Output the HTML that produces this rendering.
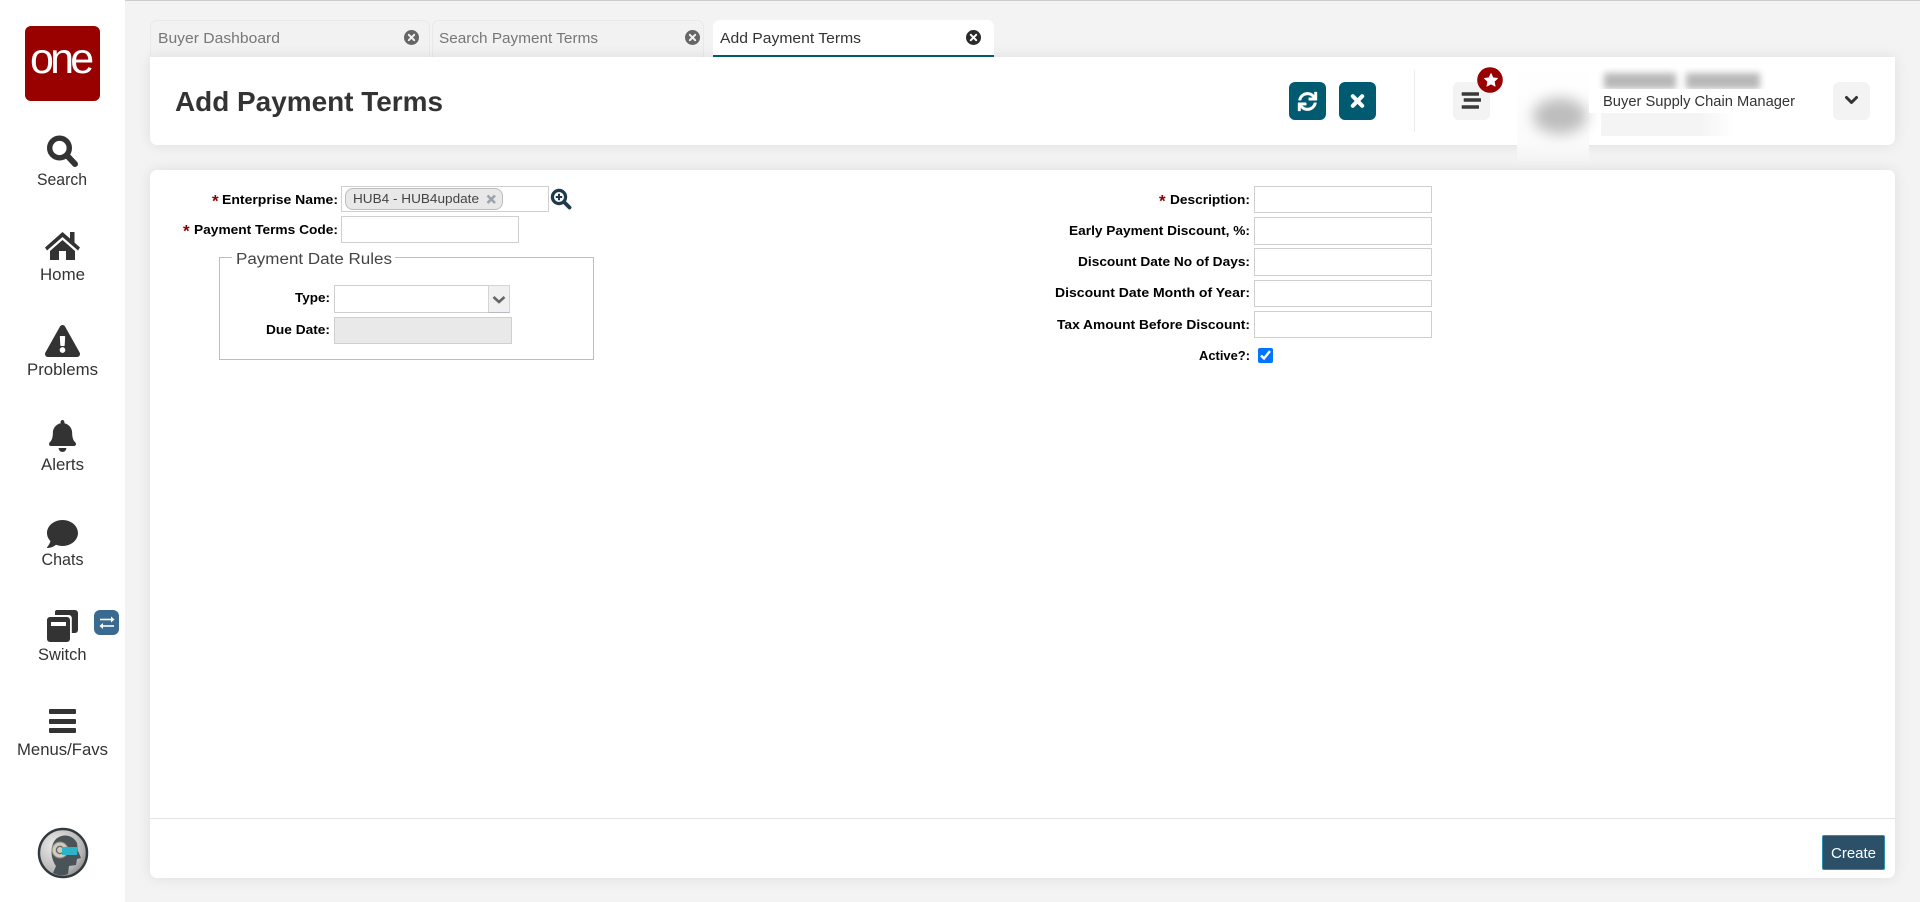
<!DOCTYPE html>
<html lang="en">
<head>
<meta charset="utf-8">
<title>Add Payment Terms</title>
<style>
html,body{margin:0;padding:0;width:1920px;height:902px;overflow:hidden;background:#f3f3f3;font-family:"Liberation Sans",sans-serif}
.a{position:absolute;box-sizing:border-box}
#top{left:0;top:0;width:1920px;height:1px;background:#ccc}
#side{left:0;top:0;width:125px;height:902px;background:#fff}
.tab{top:20px;height:37px;background:#f2f2f2;border:1px solid #e9e9e9;border-bottom:0;border-radius:7px 7px 0 0}
.card{background:#fff;border-radius:7px;box-shadow:0 0 14px rgba(0,0,0,.09)}
input[type=text]{position:absolute;box-sizing:border-box;margin:0;padding:0;background:#fff;border:1px solid #cfcfcf;outline:0}
#overlay{position:absolute;left:0;top:0;width:1920px;height:902px;pointer-events:none}
text{font-family:"Liberation Sans",sans-serif}
.nav{font-size:16.5px;fill:#333}
.lb{font-size:13px;font-weight:700;fill:#000}
.st{font-size:17px;font-weight:700;fill:#8b0000}
</style>
</head>
<body>
<div class="a" id="top"></div>
<div class="a tab" style="left:150px;width:280px"></div>
<div class="a tab" style="left:432px;width:272px"></div>
<div class="a card" style="left:150px;top:57px;width:1745px;height:88px;border-radius:0 0 7px 7px"></div>
<div class="a" style="left:713px;top:20px;width:281px;height:37px;background:#fff;border-radius:7px 7px 0 0;border-bottom:2px solid #005a70"></div>
<div class="a card" style="left:150px;top:170px;width:1745px;height:708px"></div>
<div class="a" style="left:150px;top:818px;width:1745px;height:1px;background:#e4e4e4"></div>
<div class="a" id="side"></div>
<div class="a" style="left:25px;top:26px;width:75px;height:75px;background:#990000;border-radius:6px"></div>

<!-- header buttons -->
<div class="a" style="left:1289px;top:82px;width:37px;height:38px;background:#005a70;border-radius:6px"></div>
<div class="a" style="left:1339px;top:82px;width:37px;height:38px;background:#005a70;border-radius:6px"></div>
<div class="a" style="left:1414px;top:70px;width:1px;height:62px;background:#ececec"></div>
<div class="a" style="left:1453px;top:82px;width:37px;height:38px;background:#f3f3f3;border-radius:6px"></div>
<div class="a" style="left:1833px;top:82px;width:37px;height:38px;background:#f3f3f3;border-radius:6px"></div>

<!-- blurred profile -->
<div class="a" style="left:1517px;top:65px;width:72px;height:96px;background:linear-gradient(#fff 0,#fbfbfb 80%,#f4f4f4 100%)"></div>
<div class="a" style="left:1533px;top:98px;width:54px;height:36px;background:#bdbdbd;border-radius:50%;filter:blur(7px)"></div>
<div class="a" style="left:1604px;top:73px;width:72px;height:16px;background:#b8b8b8;filter:blur(3.5px)"></div>
<div class="a" style="left:1686px;top:73px;width:74px;height:16px;background:#b8b8b8;filter:blur(3.5px)"></div>
<div class="a" style="left:1589px;top:89px;width:215px;height:24px;background:#fff"></div>
<div class="a" style="left:1601px;top:113px;width:132px;height:23px;background:linear-gradient(to right,#f4f4f4 75%,#fff)"></div>

<!-- form, left -->
<input type="text" style="left:341px;top:186px;width:208px;height:26px">
<div class="a" style="left:345px;top:188px;width:158px;height:22px;background:#e8e8e8;border:1px solid #bdbdbd;border-radius:8px"></div>
<input type="text" style="left:341px;top:216px;width:178px;height:27px">
<div class="a" style="left:219px;top:257px;width:375px;height:103px;border:1px solid #bcbcc9"></div>
<div class="a" style="left:232px;top:250px;width:163px;height:16px;background:#fff"></div>
<input type="text" style="left:334px;top:285px;width:176px;height:28px">
<div class="a" style="left:488px;top:285px;width:22px;height:28px;background:#f0f0f0;border:1px solid #d4d4d4;border-bottom-color:#b9b9c6"></div>
<input type="text" disabled style="left:334px;top:317px;width:178px;height:27px;background:#e9e9e9">

<!-- form, right -->
<input type="text" style="left:1254px;top:186px;width:178px;height:27px">
<input type="text" style="left:1254px;top:217px;width:178px;height:28px">
<input type="text" style="left:1254px;top:248px;width:178px;height:28px">
<input type="text" style="left:1254px;top:280px;width:178px;height:27px">
<input type="text" style="left:1254px;top:311px;width:178px;height:27px">
<input type="checkbox" checked style="position:absolute;left:1258px;top:348px;width:15px;height:15px;margin:0">

<!-- create -->
<div class="a" style="left:1822px;top:835px;width:63px;height:35px;background:#2c5068;border:1px solid #2a8fae;border-radius:2px"></div>

<svg id="overlay" viewBox="0 0 1920 902" xmlns="http://www.w3.org/2000/svg">
  <!-- logo -->
  <text x="30" y="73" font-size="43" fill="#fff" letter-spacing="-3.8">one</text>

  <!-- sidebar icons -->
  <g fill="#333">
    <circle cx="59.5" cy="148" r="9.8" fill="none" stroke="#333" stroke-width="5.4"/>
    <path d="M67 155.5 75 164" stroke="#333" stroke-width="6" stroke-linecap="round" fill="none"/>
    <path d="M62.5 232 45 247.5 47 250.5 62.5 237 78 250.5 80 247.5 74.5 242.5V232H70V238.5Z"/>
    <path d="M62.5 240 50 251V260H59V251H66V260H75V251Z"/>
    <path transform="translate(45 325) scale(.0608 .0625)" d="M569.517 440.013C587.975 472.007 564.806 512 527.94 512H48.054c-36.937 0-59.999-40.055-41.577-71.987L246.423 23.985c18.467-32.009 64.72-31.951 83.154 0l239.94 416.028zM288 354c-25.405 0-46 20.595-46 46s20.595 46 46 46 46-20.595 46-46-20.595-46-46-46zm-43.673-165.346l7.418 136c.347 6.364 5.609 11.346 11.982 11.346h48.546c6.373 0 11.635-4.982 11.982-11.346l7.418-136c.375-6.874-5.098-12.654-11.982-12.654h-63.383c-6.884 0-12.356 5.78-11.981 12.654z"/>
    <path transform="translate(49 420) scale(.0603 .0625)" d="M224 512c35.32 0 63.97-28.65 63.97-64H160.03c0 35.35 28.65 64 63.97 64zm215.39-149.71c-19.32-20.76-55.47-51.99-55.47-154.29 0-77.7-54.48-139.9-127.94-155.16V32c0-17.67-14.32-32-31.98-32s-31.98 14.33-31.98 32v20.84C118.56 68.1 64.08 130.3 64.08 208c0 102.3-36.15 133.53-55.47 154.29-6 6.45-8.66 14.16-8.61 21.71.11 16.4 12.98 32 32.1 32h383.8c19.12 0 32-15.6 32.1-32 .05-7.55-2.61-15.27-8.61-21.71z"/>
    <path transform="translate(47 520) scale(.0605 .0625) translate(0 -32)" d="M256 32C114.6 32 0 125.1 0 240c0 49.6 21.4 95 57 130.7C44.5 421.1 2.7 466 2.2 466.5c-2.2 2.3-2.8 5.7-1.5 8.7S4.8 480 8 480c66.3 0 116-31.8 140.6-51.4 32.7 12.3 69 19.4 107.4 19.4 141.4 0 256-93.1 256-208S397.4 32 256 32z"/>
    <!-- switch -->
    <path d="M57 610H75a3 3 0 0 1 3 3V630a3 3 0 0 1-3 3H71.8V618a3 3 0 0 0-3-3H55V612a2 2 0 0 1 2-2Z"/>
    <path d="M50 617H67a3 3 0 0 1 3 3V639a3 3 0 0 1-3 3H50a3 3 0 0 1-3-3V620a3 3 0 0 1 3-3ZM51 622V626H66V622Z" fill-rule="evenodd"/>
    <!-- menu -->
    <rect x="49" y="709" width="27" height="5" rx="1"/>
    <rect x="49" y="719" width="27" height="5" rx="1"/>
    <rect x="49" y="728" width="27" height="5" rx="1"/>
  </g>
  <!-- switch badge -->
  <rect x="94" y="610" width="25" height="25" rx="6" fill="#3a6a8f"/>
  <g stroke="#fff" stroke-width="1.6" fill="#fff">
    <path d="M100 619.5H112" fill="none"/><path d="M111 616.5 114.5 619.5 111 622.5Z" stroke="none"/>
    <path d="M102 626H114" fill="none"/><path d="M103 623 99.5 626 103 629Z" stroke="none"/>
  </g>

  <!-- avatar -->
  <defs>
    <radialGradient id="av" cx=".35" cy=".35" r=".8"><stop offset="0" stop-color="#eeeeee"/><stop offset=".7" stop-color="#b4b4b4"/><stop offset="1" stop-color="#777"/></radialGradient>
  </defs>
  <circle cx="63" cy="853" r="24" fill="url(#av)" stroke="#333a3e" stroke-width="2.5"/>
  <path d="M53 873 56 866C50 858 50 845 56 839 63 833 73 835 77 843L78 851 81 858 77 859 76 865 69 866 68 874Q60 877 53 873Z" fill="#4a5358"/>
  <circle cx="60" cy="850" r="8" fill="#cfcbbd" stroke="#8a8a80" stroke-width="1"/>
  <circle cx="60" cy="850" r="3.6" fill="none" stroke="#666" stroke-width="1.3"/>
  <path d="M62 847H78L77 855H62Z" fill="#2eb4c8"/>

  <!-- nav labels -->
  <text class="nav" x="37" y="185" textLength="50" lengthAdjust="spacingAndGlyphs">Search</text>
  <text class="nav" x="40" y="280" textLength="45" lengthAdjust="spacingAndGlyphs">Home</text>
  <text class="nav" x="27" y="375" textLength="71" lengthAdjust="spacingAndGlyphs">Problems</text>
  <text class="nav" x="41" y="470" textLength="43" lengthAdjust="spacingAndGlyphs">Alerts</text>
  <text class="nav" x="41.5" y="565" textLength="42" lengthAdjust="spacingAndGlyphs">Chats</text>
  <text class="nav" x="38" y="660" textLength="48.5" lengthAdjust="spacingAndGlyphs">Switch</text>
  <text class="nav" x="17" y="755" textLength="91" lengthAdjust="spacingAndGlyphs">Menus/Favs</text>

  <!-- tabs -->
  <text x="158" y="43" font-size="14.5" fill="#777" textLength="122" lengthAdjust="spacingAndGlyphs">Buyer Dashboard</text>
  <text x="439" y="43" font-size="14.5" fill="#777" textLength="159" lengthAdjust="spacingAndGlyphs">Search Payment Terms</text>
  <text x="720" y="43" font-size="14.5" fill="#333" textLength="141" lengthAdjust="spacingAndGlyphs">Add Payment Terms</text>
  <g stroke-width="2" stroke="#f2f2f2" stroke-linecap="round">
    <circle cx="411.5" cy="37.5" r="7.5" fill="#666" stroke="none"/>
    <path d="M408.8 34.8 414.2 40.2M414.2 34.8 408.8 40.2"/>
    <circle cx="692.5" cy="37.5" r="7.5" fill="#666" stroke="none"/>
    <path d="M689.8 34.8 695.2 40.2M695.2 34.8 689.8 40.2"/>
    <circle cx="973.5" cy="37.5" r="7.5" fill="#2b2b2b" stroke="none"/>
    <path d="M970.8 34.8 976.2 40.2M976.2 34.8 970.8 40.2" stroke="#fff"/>
  </g>

  <!-- title -->
  <text x="175" y="111" font-size="28" font-weight="700" fill="#333" textLength="268" lengthAdjust="spacingAndGlyphs">Add Payment Terms</text>

  <!-- header icons -->
  <path transform="translate(1298 92) scale(.0371 .0371)" fill="#fff" stroke="#fff" stroke-width="10" d="M440.65 12.57l4 82.77A247.16 247.16 0 0 0 255.83 8C134.73 8 33.91 94.92 12.29 209.82A12 12 0 0 0 24.09 224h49.05a12 12 0 0 0 11.67-9.26 175.91 175.91 0 0 1 317-56.94l-101.46-4.86a12 12 0 0 0-12.57 12v47.41a12 12 0 0 0 12 12H500a12 12 0 0 0 12-12V12a12 12 0 0 0-12-12h-47.37a12 12 0 0 0-11.98 12.57zM255.83 432a175.61 175.61 0 0 1-146-77.8l101.8 4.87a12 12 0 0 0 12.57-12v-47.4a12 12 0 0 0-12-12H12a12 12 0 0 0-12 12V500a12 12 0 0 0 12 12h47.35a12 12 0 0 0 12-12.6l-4.15-82.57A247.17 247.17 0 0 0 255.83 504c121.11 0 221.93-86.92 243.55-201.82a12 12 0 0 0-11.8-14.18h-49.05a12 12 0 0 0-11.67 9.26A175.86 175.86 0 0 1 255.83 432z"/>
  <path d="M1352.8 96.2 1362.2 105.8M1362.2 96.2 1352.8 105.8" stroke="#fff" stroke-width="4" stroke-linecap="round" fill="none"/>
  <g fill="#3a3a3a">
    <rect x="1461.7" y="92.2" width="17.3" height="3.6" rx=".5"/>
    <rect x="1463.7" y="98.2" width="17.3" height="3.6" rx=".5"/>
    <rect x="1461.7" y="105.2" width="17.3" height="3.6" rx=".5"/>
  </g>
  <circle cx="1490" cy="80" r="12.8" fill="#990000"/>
  <path d="M1491 73.5 1493 77.8 1497.5 78.4 1494.2 81.5 1495.1 86.2 1491 83.9 1486.9 86.2 1487.8 81.5 1484.5 78.4 1489 77.8Z" fill="#fff" stroke="#fff" stroke-width=".8" stroke-linejoin="round"/>
  <path d="M1846.5 97.5 1851.5 102.5 1856.5 97.5" fill="none" stroke="#333" stroke-width="3" stroke-linecap="round" stroke-linejoin="round"/>
  <text x="1603" y="106" font-size="14.5" fill="#333" textLength="192" lengthAdjust="spacingAndGlyphs">Buyer Supply Chain Manager</text>

  <!-- left labels -->
  <text class="st" x="212" y="206.5">*</text>
  <text class="lb" x="222" y="204" textLength="116" lengthAdjust="spacingAndGlyphs">Enterprise Name:</text>
  <text class="st" x="183" y="236.5">*</text>
  <text class="lb" x="194" y="234" textLength="144" lengthAdjust="spacingAndGlyphs">Payment Terms Code:</text>
  <text x="236" y="264" font-size="15.5" fill="#444" textLength="156" lengthAdjust="spacingAndGlyphs">Payment Date Rules</text>
  <text class="lb" x="295" y="302" textLength="35" lengthAdjust="spacingAndGlyphs">Type:</text>
  <text class="lb" x="266" y="334" textLength="64" lengthAdjust="spacingAndGlyphs">Due Date:</text>

  <text x="353" y="203" font-size="13" fill="#444" textLength="126" lengthAdjust="spacingAndGlyphs">HUB4 - HUB4update</text>
  <path d="M487.5 195.5 495 203M495 195.5 487.5 203" stroke="#9aa3ad" stroke-width="2.6" fill="none"/>
  <circle cx="559" cy="197" r="6.6" fill="none" stroke="#1d3b4c" stroke-width="3.2"/>
  <path d="M564 202 569.5 207.5" stroke="#1d3b4c" stroke-width="3.8" stroke-linecap="round"/>
  <path d="M559 193.8V200.2M555.8 197H562.2" stroke="#1d3b4c" stroke-width="2"/>
  <path d="M493.5 297 499 302 504.5 297" fill="none" stroke="#666" stroke-width="2.6"/>

  <!-- right labels -->
  <text class="st" x="1159" y="206.5">*</text>
  <text class="lb" x="1170" y="204" textLength="80" lengthAdjust="spacingAndGlyphs">Description:</text>
  <text class="lb" x="1069" y="235" textLength="181" lengthAdjust="spacingAndGlyphs">Early Payment Discount, %:</text>
  <text class="lb" x="1078" y="266" textLength="172" lengthAdjust="spacingAndGlyphs">Discount Date No of Days:</text>
  <text class="lb" x="1055" y="297" textLength="195" lengthAdjust="spacingAndGlyphs">Discount Date Month of Year:</text>
  <text class="lb" x="1057" y="329" textLength="193" lengthAdjust="spacingAndGlyphs">Tax Amount Before Discount:</text>
  <text class="lb" x="1199" y="360" textLength="51" lengthAdjust="spacingAndGlyphs">Active?:</text>

  <!-- create -->
  <text x="1831" y="858" font-size="15" fill="#fff" textLength="45" lengthAdjust="spacingAndGlyphs">Create</text>
</svg>
</body>
</html>
